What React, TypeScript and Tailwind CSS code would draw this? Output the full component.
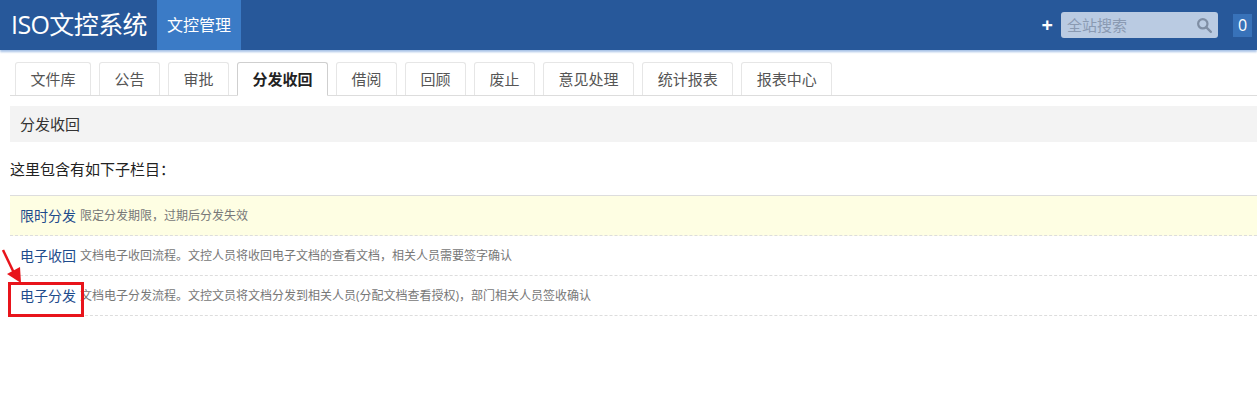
import React from "react";

const tabs = ["文件库", "公告", "审批", "分发收回", "借阅", "回顾", "废止", "意见处理", "统计报表", "报表中心"];

const rows = [
  { title: "限时分发", desc: "限定分发期限，过期后分发失效", hl: true },
  { title: "电子收回", desc: "文档电子收回流程。文控人员将收回电子文档的查看文档，相关人员需要签字确认" },
  { title: "电子分发", desc: "文档电子分发流程。文控文员将文档分发到相关人员(分配文档查看授权)，部门相关人员签收确认", boxed: true },
];

export default function App() {
  return (
    <div
      className="relative w-[1257px] h-[414px] bg-white overflow-hidden text-[#333]"
      style={{ fontFamily: '"Open Sans", "Noto Sans CJK SC", sans-serif' }}
    >
      {/* Navbar */}
      <div className="h-[50px] bg-[#27589a] flex items-stretch shadow-[0_2px_2px_rgba(60,120,200,0.45)]">
        <div className="pl-[11px] pr-[10px] w-[157px] flex items-center text-white text-[25px] tracking-[-0.6px] whitespace-nowrap">ISO文控系统</div>
        <div className="w-[84px] bg-[#3b7bc6] flex items-center justify-center text-white text-[16px]">文控管理</div>
        <div className="flex-1" />
        <div className="flex items-center">
          <span className="text-white text-[20px] font-bold mr-[8px] leading-none">+</span>
          <div className="w-[157px] h-[26px] rounded-[3px] bg-[#bacbe2] flex items-center justify-between pl-[6px] pr-[5px]">
            <span className="text-[#8a9ab2] text-[15px]">全站搜索</span>
            <svg width="17" height="17" viewBox="0 0 20 20" fill="none" stroke="#7f8ea4" strokeWidth="2.6" strokeLinecap="round">
              <circle cx="8" cy="8" r="5.5" />
              <line x1="12.2" y1="12.2" x2="17.5" y2="17.5" />
            </svg>
          </div>
          <div className="ml-[15px] mr-[5px] w-[19px] h-[23px] bg-[#3872b9] text-white text-[16px] flex items-center justify-center">0</div>
        </div>
      </div>

      {/* Tabs */}
      <div className="mt-[12px] ml-[10px] border-b border-[#dddddd] flex items-end pl-[5px] gap-[8px] h-[34px]">
        {tabs.map((t, i) => {
          const active = t === "分发收回";
          return (
            <div
              key={i}
              className={
                active
                  ? "h-[34px] px-[14.5px] border border-[#cfcfcf] border-b-white -mb-px rounded-t-[3px] bg-white flex items-center text-[15px] font-bold text-[#222]"
                  : "h-[33px] px-[14.5px] border border-[#e6e6e6] border-b-0 rounded-t-[3px] bg-white flex items-center text-[15px] text-[#555]"
              }
            >
              {t}
            </div>
          );
        })}
      </div>

      {/* Panel heading */}
      <div className="mt-[10px] ml-[10px] h-[36px] bg-[#f3f3f3] flex items-center pl-[10px] text-[15px] text-[#333]">分发收回</div>

      <div className="ml-[10px] mt-[17px] text-[15px] text-[#222] leading-[20px]">这里包含有如下子栏目：</div>

      {/* List */}
      <div className="ml-[10px] mt-[16px] border-t border-[#dddddd]">
        {rows.map((r, i) => (
          <div
            key={i}
            className={
              "h-[40px] flex items-center pl-[10px] border-b border-dashed border-[#dddddd] " +
              (r.hl ? "bg-[#fefee3]" : "bg-white")
            }
          >
            <span className="text-[14px] text-[#1e4c8c]">{r.title}</span>
            <span className="ml-[4px] text-[12px] text-[#777]">{r.desc}</span>
          </div>
        ))}
      </div>

      {/* Red annotation box */}
      <div className="absolute left-[8px] top-[282px] w-[76px] h-[35px] border-[3px] border-[#e8141b]" />
      {/* Arrow */}
      <svg className="absolute left-0 top-[248px]" width="30" height="40" viewBox="0 0 30 40">
        <line x1="3" y1="2" x2="14" y2="25" stroke="#e8141b" strokeWidth="2.5" />
        <polygon points="21,35 7,26 20,19" fill="#e8141b" />
      </svg>
    </div>
  );
}
